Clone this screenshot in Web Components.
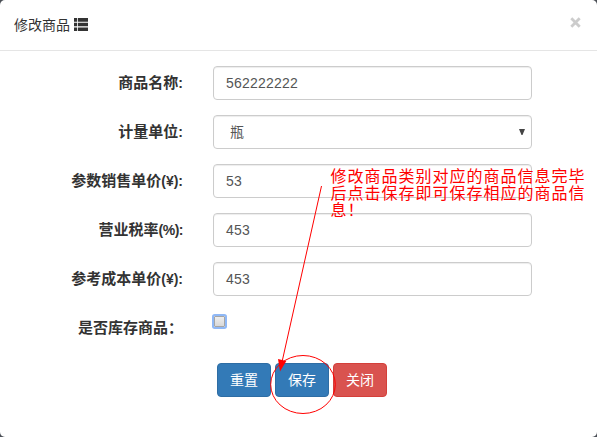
<!DOCTYPE html>
<html lang="zh-CN">
<head>
<meta charset="utf-8">
<title>修改商品</title>
<style>
body
{
    margin: 0;
    background-color: #4b4f56;
    color: #333;
    font-family: "Liberation Sans", "Noto Sans CJK SC", sans-serif;
    font-size: 14px;
    line-height: 20px;
}
</style>
</head>
<body>
<product-dialog>
    <span slot="title">修改商品</span>
    <form-row label="商品名称" suffix=":"><text-field>562222222</text-field></form-row>
    <form-row label="计量单位" suffix=":"><select-field>瓶</select-field></form-row>
    <form-row label="参数销售单价" suffix="(¥):"><text-field>53</text-field></form-row>
    <form-row label="营业税率" suffix="(%):" tight><text-field>453</text-field></form-row>
    <form-row label="参考成本单价" suffix="(¥):"><text-field>453</text-field></form-row>
    <form-row label="是否库存商品：" suffix=""><check-box></check-box></form-row>
    <action-button slot="actions">重置</action-button>
    <action-button slot="actions">保存</action-button>
    <action-button slot="actions" kind="danger">关闭</action-button>
    <help-note slot="note">修改商品类别对应的商品信息完毕<br>后点击保存即可保存相应的商品信<br>息！</help-note>
</product-dialog>

<script>
function makeTemplate(html) {
    const template = document.createElement('template');
    template.innerHTML = html;
    return template;
}

const dialogTemplate = makeTemplate(`
<style>
:host
{
    display: flex;
    flex-direction: column;
    position: relative;
    box-sizing: border-box;
    height: 437px;
    background-color: #fff;
    border-radius: 5px;
    overflow: hidden;
}

.header
{
    display: flex;
    justify-content: space-between;
    box-sizing: border-box;
    height: 51px;
    padding: 15px 14px 0;
    border-bottom: 1px solid #e5e5e5;
}

.title
{
    display: flex;
    gap: 4px;
}

.list
{
    display: block;
    margin-top: 3px;
}

.close
{
    display: block;
    margin: 2px 2px 0 0;
}

.body
{
    display: flex;
    flex-direction: column;
    gap: 15px;
    padding-top: 15px;
}

.actions
{
    display: flex;
    gap: 4px;
    padding: 18px 0 0 217px;
}
</style>

<div class="header">
    <div class="title">
        <slot name="title"></slot>
        <svg class="list" width="14" height="13" viewBox="0 0 14 13" fill="#333">
            <path d="M0 0h3.2v3.7H0zM4 0h10v3.7H4zM0 4.8h3.2v3.4H0zM4 4.8h10v3.4H4zM0 9.4h3.2v3.6H0zM4 9.4h10v3.6H4z"/>
        </svg>
    </div>
    <svg class="close" width="11" height="11" viewBox="0 0 11 11" stroke="#ccc" stroke-width="2.8">
        <path d="M1.3 1.3L9.7 9.7M9.7 1.3L1.3 9.7"/>
    </svg>
</div>
<div class="body"><slot></slot></div>
<div class="actions"><slot name="actions"></slot></div>
<slot name="note"></slot>
`);

class ProductDialog extends HTMLElement {
    constructor() {
        super();
        this.attachShadow({ mode: 'open' });
        this.shadowRoot.appendChild(dialogTemplate.content.cloneNode(true));
    }
}

const rowTemplate = makeTemplate(`
<style>
:host
{
    display: grid;
    grid-template-columns: 183px 319px;
    column-gap: 30px;
    height: 34px;
}

.label
{
    padding-top: 7px;
    text-align: right;
    font-weight: bold;
    white-space: nowrap;
}

.name
{
    font-size: 15px;
}

:host([tight]) .suffix
{
    letter-spacing: -.5px;
}
</style>

<div class="label"><span class="name"></span><span class="suffix"></span></div>
<slot></slot>
`);

class FormRow extends HTMLElement {
    constructor() {
        super();
        this.attachShadow({ mode: 'open' });
        this.shadowRoot.appendChild(rowTemplate.content.cloneNode(true));
        this.shadowRoot.querySelector('.name').textContent = this.getAttribute('label');
        this.shadowRoot.querySelector('.suffix').textContent = this.getAttribute('suffix');
    }
}

const fieldStyle = `
:host
{
    display: flex;
    align-items: center;
    justify-content: space-between;
    box-sizing: border-box;
    height: 34px;
    padding: 0 12px;
    border: 1px solid #ccc;
    border-radius: 4px;
    box-shadow: inset 0 1px 1px rgba(0, 0, 0, .075);
    color: #555;
    background-color: #fff;
}
`;

const textTemplate = makeTemplate(`
<style>
${fieldStyle}
.value
{
    letter-spacing: .2px;
}
</style>
<span class="value"><slot></slot></span>
`);

class TextField extends HTMLElement {
    constructor() {
        super();
        this.attachShadow({ mode: 'open' });
        this.shadowRoot.appendChild(textTemplate.content.cloneNode(true));
    }
}

const selectTemplate = makeTemplate(`
<style>
${fieldStyle}
:host
{
    padding: 0 6px 0 16px;
}
</style>
<span><slot></slot></span>
<svg width="6" height="6" viewBox="0 0 6 6" fill="#444"><path d="M0 0h6L3.5 6h-1z"/></svg>
`);

class SelectField extends HTMLElement {
    constructor() {
        super();
        this.attachShadow({ mode: 'open' });
        this.shadowRoot.appendChild(selectTemplate.content.cloneNode(true));
    }
}

const checkTemplate = makeTemplate(`
<style>
:host
{
    display: block;
}

.box
{
    box-sizing: border-box;
    width: 11px;
    height: 11px;
    margin: 5px 0 0 1px;
    border: 1px solid #a5a5a5;
    background-image: linear-gradient(#eee, #d8d8d8);
    box-shadow: 0 0 0 2px #8fb8f6;
    border-radius: 1px;
}
</style>
<div class="box"></div>
`);

class CheckBox extends HTMLElement {
    constructor() {
        super();
        this.attachShadow({ mode: 'open' });
        this.shadowRoot.appendChild(checkTemplate.content.cloneNode(true));
    }
}

const buttonTemplate = makeTemplate(`
<style>
:host
{
    display: flex;
    align-items: center;
    justify-content: center;
    box-sizing: border-box;
    width: 54px;
    height: 34px;
    border: 1px solid #2e6da4;
    border-radius: 4px;
    color: #fff;
    background-color: #337ab7;
    cursor: pointer;
}

:host([kind="danger"])
{
    border-color: #d43f3a;
    background-color: #d9534f;
}
</style>
<slot></slot>
`);

class ActionButton extends HTMLElement {
    constructor() {
        super();
        this.attachShadow({ mode: 'open' });
        this.shadowRoot.appendChild(buttonTemplate.content.cloneNode(true));
    }
}

// red callout lying over the form: text, arrow and a ring round the save button
const noteTemplate = makeTemplate(`
<style>
:host
{
    display: block;
    position: absolute;
    inset: 0;
    pointer-events: none;
    color: #f00;
}

svg
{
    position: absolute;
    left: 0;
    top: 0;
}

.text
{
    position: absolute;
    left: 330.5px;
    top: 168px;
    font-size: 16px;
    line-height: 17px;
    letter-spacing: 1px;
    white-space: nowrap;
}
</style>
<svg width="597" height="437" viewBox="0 0 597 437" fill="none" stroke="#f00">
    <path d="M321.5 186L282 362"/>
    <path d="M278 359L286.3 361L280 371.5z" fill="#f00" stroke="none"/>
    <ellipse cx="303" cy="384.5" rx="32.3" ry="29"/>
</svg>
<div class="text"><slot></slot></div>
`);

class HelpNote extends HTMLElement {
    constructor() {
        super();
        this.attachShadow({ mode: 'open' });
        this.shadowRoot.appendChild(noteTemplate.content.cloneNode(true));
    }
}

window.customElements.define('product-dialog', ProductDialog);
window.customElements.define('form-row', FormRow);
window.customElements.define('text-field', TextField);
window.customElements.define('select-field', SelectField);
window.customElements.define('check-box', CheckBox);
window.customElements.define('action-button', ActionButton);
window.customElements.define('help-note', HelpNote);
</script>
</body>
</html>
